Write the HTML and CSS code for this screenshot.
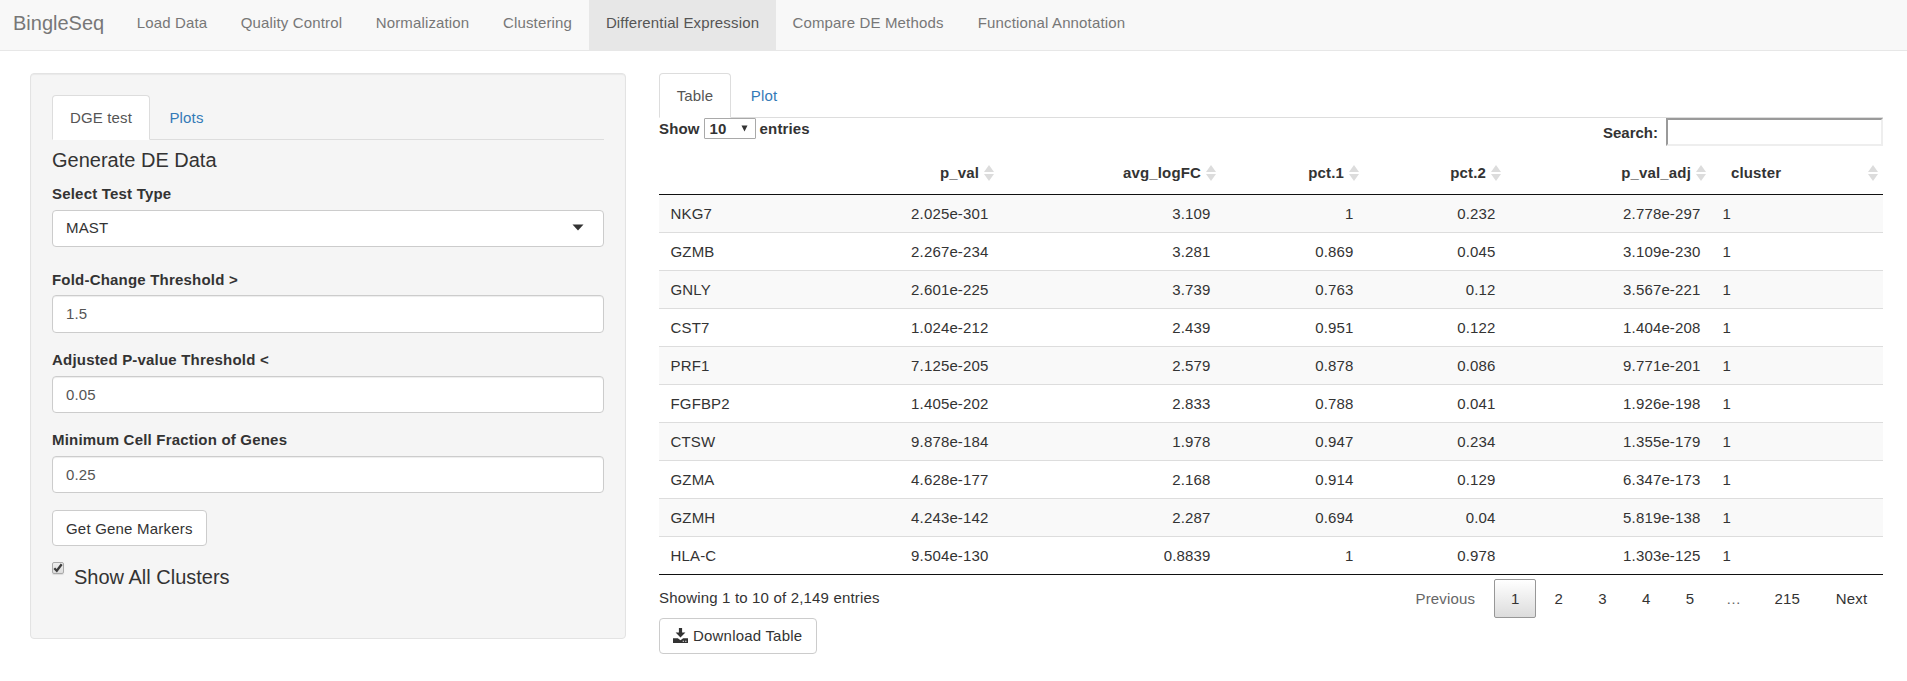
FILE: index.html
```html
<!DOCTYPE html>
<html lang="en">
<head>
<meta charset="utf-8">
<title>BingleSeq</title>
<link rel="stylesheet" href="styles.css">
</head>
<body>
<nav class="navbar">
  <a class="brand">BingleSeq</a>
  <a class="nav-item nav-load">Load Data</a>
  <a class="nav-item nav-quality">Quality Control</a>
  <a class="nav-item nav-norm">Normalization</a>
  <a class="nav-item nav-clust">Clustering</a>
  <a class="nav-item nav-diff active">Differential Expression</a>
  <a class="nav-item nav-compare">Compare DE Methods</a>
  <a class="nav-item nav-func">Functional Annotation</a>
</nav>
<div class="page">
  <aside class="well">
    <div class="tabs">
      <a class="tab tab-dge active">DGE test</a>
      <a class="tab tab-plots">Plots</a>
    </div>
    <h4 class="heading">Generate DE Data</h4>
    <label class="label">Select Test Type</label>
    <div class="control select">MAST<svg class="caret" width="12" height="7" viewBox="0 0 12 7"><path d="M0.5 0.5h11L6 6.5z" fill="#333"/></svg></div>
    <label class="label label-fold">Fold-Change Threshold &gt;</label>
    <div class="control input input-fold">1.5</div>
    <label class="label label-pval">Adjusted P-value Threshold &lt;</label>
    <div class="control input">0.05</div>
    <label class="label label-frac">Minimum Cell Fraction of Genes</label>
    <div class="control input">0.25</div>
    <button class="btn btn-markers">Get Gene Markers</button>
    <div class="check-row">
      <span class="checkbox"><svg width="10" height="10" viewBox="0 0 10 10"><path d="M1.300 5.200L3.800 7.800L8.700 1.300" fill="none" stroke="#3c3c3c" stroke-width="2.3"/></svg></span>
      <h4 class="check-label">Show All Clusters</h4>
    </div>
  </aside>
  <main class="main">
    <div class="tabs">
      <a class="tab tab-table active">Table</a>
      <a class="tab tab-plot">Plot</a>
    </div>
    <div class="tools">
      <div class="length">Show <span class="length-select">10<svg width="7" height="7" viewBox="0 0 7 7"><path d="M0.5 0.5h6L3.5 6.5z" fill="#333"/></svg></span> entries</div>
      <div class="search">Search:<span class="search-box"></span></div>
    </div>
    <table class="data">
      <colgroup><col class="c-name"><col class="c-pval"><col class="c-fc"><col class="c-p1"><col class="c-p2"><col class="c-adj"><col class="c-cl"></colgroup>
      <thead><tr>
        <th></th>
        <th>p_val<i class="sort"></i></th>
        <th>avg_logFC<i class="sort"></i></th>
        <th>pct.1<i class="sort"></i></th>
        <th>pct.2<i class="sort"></i></th>
        <th>p_val_adj<i class="sort"></i></th>
        <th class="left">cluster<i class="sort"></i></th>
      </tr></thead>
      <tbody>
        <tr><td>NKG7</td><td>2.025e-301</td><td>3.109</td><td>1</td><td>0.232</td><td>2.778e-297</td><td>1</td></tr>
        <tr><td>GZMB</td><td>2.267e-234</td><td>3.281</td><td>0.869</td><td>0.045</td><td>3.109e-230</td><td>1</td></tr>
        <tr><td>GNLY</td><td>2.601e-225</td><td>3.739</td><td>0.763</td><td>0.12</td><td>3.567e-221</td><td>1</td></tr>
        <tr><td>CST7</td><td>1.024e-212</td><td>2.439</td><td>0.951</td><td>0.122</td><td>1.404e-208</td><td>1</td></tr>
        <tr><td>PRF1</td><td>7.125e-205</td><td>2.579</td><td>0.878</td><td>0.086</td><td>9.771e-201</td><td>1</td></tr>
        <tr><td>FGFBP2</td><td>1.405e-202</td><td>2.833</td><td>0.788</td><td>0.041</td><td>1.926e-198</td><td>1</td></tr>
        <tr><td>CTSW</td><td>9.878e-184</td><td>1.978</td><td>0.947</td><td>0.234</td><td>1.355e-179</td><td>1</td></tr>
        <tr><td>GZMA</td><td>4.628e-177</td><td>2.168</td><td>0.914</td><td>0.129</td><td>6.347e-173</td><td>1</td></tr>
        <tr><td>GZMH</td><td>4.243e-142</td><td>2.287</td><td>0.694</td><td>0.04</td><td>5.819e-138</td><td>1</td></tr>
        <tr><td>HLA-C</td><td>9.504e-130</td><td>0.8839</td><td>1</td><td>0.978</td><td>1.303e-125</td><td>1</td></tr>
      </tbody>
    </table>
    <div class="footer">
      <div class="info-col">
        <div class="info">Showing 1 to 10 of 2,149 entries</div>
        <button class="btn btn-download"><svg class="dl" width="15" height="15" viewBox="0 0 15 15"><path fill="#333" d="M5.900 0h3.200v4.600h3.300L7.500 9.400L2.600 4.600h3.300zM0 10.200h4.800l2.700 2l2.700-2H15V15H0z"/><path fill="#fff" d="M9.700 12.800h1.200v1h-1.200zM12.200 12.800h1.200v1h-1.200z"/></svg>Download Table</button>
      </div>
      <div class="pager">
        <a class="pg pg-prev">Previous</a>
        <a class="pg current">1</a>
        <a class="pg">2</a>
        <a class="pg">3</a>
        <a class="pg">4</a>
        <a class="pg">5</a>
        <a class="pg pg-dots">…</a>
        <a class="pg pg-last">215</a>
        <a class="pg pg-next">Next</a>
      </div>
    </div>
  </main>
</div>
</body>
</html>
```

FILE: styles.css
```css
* { box-sizing: border-box; }
body {
  margin: 0;
  width: 1907px;
  height: 681px;
  overflow: hidden;
  background: #fff;
  color: #333;
  font: 15px/21px "Liberation Sans", Arial, sans-serif;
  letter-spacing: 0.15px;
}
h4 { margin: 0; font-weight: 400; }
.navbar {
  display: flex;
  height: 51px;
  background: #f8f8f8;
  border-bottom: 1px solid #e7e7e7;
  color: #777;
}
.brand { width: 120px; padding: 13px 0 0 13px; font-size: 20px; letter-spacing: 0; }
.nav-item { padding-top: 12px; text-align: center; white-space: nowrap; }
.nav-load { width: 104px; }
.nav-quality { width: 135px; }
.nav-norm { width: 127px; }
.nav-clust { width: 103px; }
.nav-diff { width: 187px; }
.nav-compare { width: 184px; }
.nav-func { width: 183px; }
.nav-item.active { height: 51px; background: #e7e7e7; color: #555; }

.page { display: flex; align-items: flex-start; padding: 22px 24px 0 30px; gap: 33px; }
.well {
  width: 596px;
  height: 566px;
  padding: 21px;
  background: #f5f5f5;
  border: 1px solid #e3e3e3;
  border-radius: 4px;
  box-shadow: inset 0 1px 1px rgba(0,0,0,.05);
}
.tabs { display: flex; height: 45px; border-bottom: 1px solid #ddd; }
.tab {
  height: 45px;
  padding-top: 11px;
  text-align: center;
  color: #337ab7;
  border: 1px solid transparent;
  border-radius: 4px 4px 0 0;
}
.tab.active { color: #555; background: #fff; border-color: #ddd #ddd #fff; }
.tab-dge { width: 98px; }
.tab-plots { width: 73px; }
.tab-table { width: 72px; }
.tab-plot { width: 66px; }

.heading { margin-top: 9px; height: 23px; line-height: 23px; font-size: 20px; letter-spacing: 0; }
.label { display: block; margin-top: 11px; height: 21px; font-weight: 700; letter-spacing: 0.2px; }
.control {
  display: flex;
  align-items: center;
  justify-content: space-between;
  height: 37px;
  margin-top: 6px;
  padding: 0 19px 2px 13px;
  background: #fff;
  border: 1px solid #ccc;
  border-radius: 4px;
}
.input { color: #555; padding-bottom: 1px; box-shadow: inset 0 1px 1px rgba(0,0,0,.075); }
.input-fold { margin-top: 5px; height: 38px; }
.label-fold { margin-top: 22px; }
.label-pval, .label-frac { margin-top: 16px; }
.btn {
  display: flex;
  align-items: center;
  height: 36px;
  padding: 0 0 0 13px;
  background: #fff;
  border: 1px solid #ccc;
  border-radius: 4px;
  color: #333;
  font: inherit;
  letter-spacing: inherit;
}
.btn-markers { width: 155px; margin-top: 17px; letter-spacing: 0.2px; }
.check-row { display: flex; margin-top: 16px; }
.checkbox {
  display: flex;
  width: 12px;
  height: 12px;
  border: 1px solid #aaa;
  border-radius: 2px;
  background: linear-gradient(#eee, #dcdcdc);
  box-shadow: 0 1px 1px rgba(0,0,0,.1);
}
.check-label { margin: 4px 0 0 10px; line-height: 23px; font-size: 20px; letter-spacing: 0; }

.main { width: 1224px; }
.tools { display: flex; justify-content: space-between; height: 36px; font-weight: 700; }
.length { display: flex; height: 21px; gap: 4px; }
.length-select {
  display: flex;
  align-items: center;
  justify-content: space-between;
  width: 52px;
  height: 21px;
  padding: 0 7px 1px 5px;
  border: 1px solid #a9a9a9;
  border-radius: 1px;
  background: #fff;
}
.search { display: flex; line-height: 30px; letter-spacing: 0; }
.search-box { width: 217px; height: 28px; margin-left: 8px; border: 2px solid; border-color: #9a9a9a #eee #eee #9a9a9a; background: #fff; }

.data { width: 1224px; table-layout: fixed; border-collapse: separate; border-spacing: 0; border-bottom: 1px solid #111; }
.c-name { width: 160px; }
.c-pval { width: 180px; }
.c-fc { width: 222px; }
.c-p1 { width: 143px; }
.c-p2 { width: 142px; }
.c-adj { width: 205px; }
.c-cl { width: 172px; }
.data th { position: relative; height: 41px; padding: 0 20px 3px; border-bottom: 1px solid #111; text-align: right; vertical-align: middle; }
.data th.left { text-align: left; }
.sort { position: absolute; right: 5px; top: 11px; width: 10px; height: 16px; }
.sort::before, .sort::after { content: ""; position: absolute; left: 0; border: 5px solid transparent; }
.sort::before { top: 0; border-top: 0; border-bottom: 7.500px solid #dcdcdc; }
.sort::after { bottom: 0; border-bottom: 0; border-top: 7.500px solid #dcdcdc; }
.data td { height: 38px; padding: 0 10.500px 0 11.500px; border-top: 1px solid #ddd; text-align: right; }
.data tr:first-child td { border-top: 0; height: 37px; }
.data td:first-child, .data td:last-child { text-align: left; }
.data tbody tr:nth-child(odd) { background: #f9f9f9; }

.footer { display: flex; justify-content: space-between; }
.info { padding-top: 12px; height: 43px; letter-spacing: 0.17px; }
.btn-download { width: 158px; padding-bottom: 2px; letter-spacing: 0.2px; }
.dl { margin-right: 5px; }
.pager { display: flex; gap: 2px; padding-top: 4px; }
.pg { width: 41.700px; height: 39px; border: 1px solid transparent; border-radius: 2px; text-align: center; line-height: 38px; }
.pg-prev { width: 94px; color: #666; }
.pg.current { border-color: #979797; background: linear-gradient(#fff, #dcdcdc); }
.pg-dots { color: #666; }
.pg-last { width: 61.600px; }
.pg-next { width: 63px; }
```
